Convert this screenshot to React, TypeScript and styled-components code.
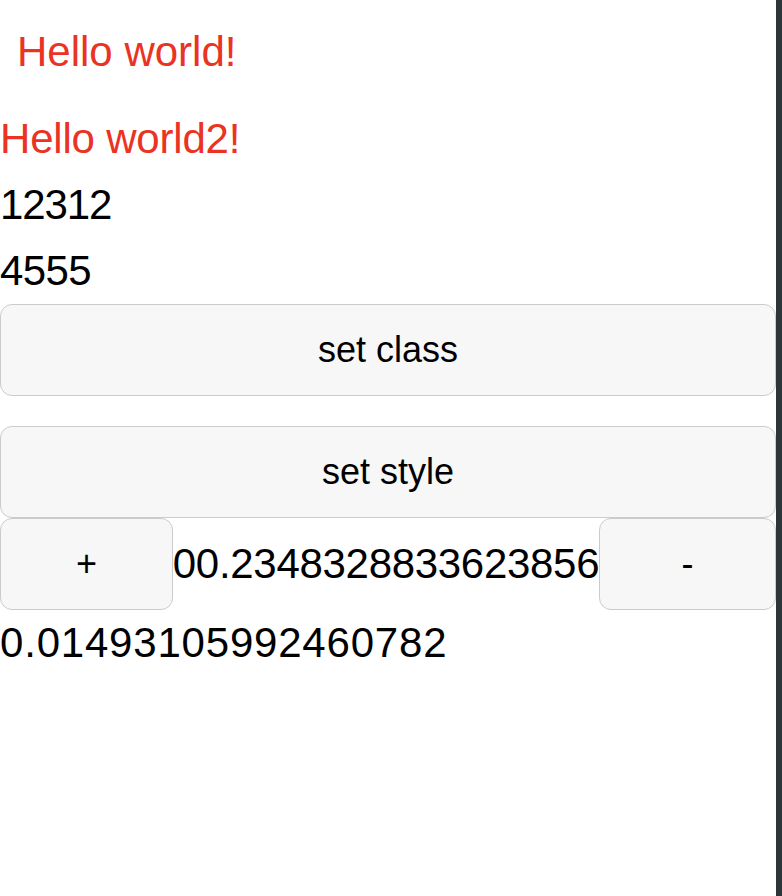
import React from "react";
import styled, { createGlobalStyle } from "styled-components";

const GlobalStyle = createGlobalStyle`
  html, body {
    margin: 0;
    padding: 0;
    background: #ffffff;
  }
  body {
    font-family: "Liberation Sans", Arial, Helvetica, sans-serif;
    color: #000000;
  }
`;

const Shell = styled.div`
  display: flex;
  width: 782px;
  min-height: 896px;
`;

const Main = styled.main`
  flex: 1;
  min-width: 0;
  display: flex;
  flex-direction: column;
`;

const EdgeStrip = styled.div`
  width: 6px;
  flex: none;
  background: #2c3538;
`;

const Line = styled.div<{ $red?: boolean; $track?: number }>`
  font-size: 42px;
  line-height: 66px;
  height: 66px;
  white-space: nowrap;
  letter-spacing: ${(p) => p.$track ?? 0}px;
  color: ${(p) => (p.$red ? "#ea3323" : "#000000")};
`;

const Title = styled(Line)`
  padding: 19px 0 21px 17px;
`;

const Button = styled.button<{ $spaced?: boolean }>`
  box-sizing: border-box;
  height: 92px;
  margin: 0 0 ${(p) => (p.$spaced ? "30px" : "0")} 0;
  padding: 0 12px;
  border: 1px solid #cbcbcb;
  border-radius: 12px;
  background: #f7f7f7;
  color: #000000;
  font-family: "Liberation Sans", Arial, Helvetica, sans-serif;
  font-size: 36px;
  cursor: pointer;
`;

const WideButton = styled(Button)`
  width: 100%;
`;

const StepRow = styled.div`
  display: flex;
  align-items: center;
  height: 92px;
`;

const StepButton = styled(Button)<{ $basis: number }>`
  flex: 1 1 ${(p) => p.$basis}px;
  min-width: 0;
`;

const RowValue = styled.span`
  flex: none;
  font-size: 42px;
  line-height: 66px;
  letter-spacing: -0.3px;
  white-space: nowrap;
`;

export default function App() {
  return (
    <>
      <GlobalStyle />
      <Shell>
        <Main>
          <Title $red>Hello world!</Title>
          <Line $red $track={-0.2}>Hello world2!</Line>
          <Line $track={-1.1}>12312</Line>
          <Line $track={-0.6}>4555</Line>
          <WideButton $spaced>set class</WideButton>
          <WideButton>set style</WideButton>
          <StepRow>
            <StepButton $basis={26}>+</StepButton>
            <RowValue>00.2348328833623856</RowValue>
            <StepButton $basis={30}>-</StepButton>
          </StepRow>
          <Line $track={0.8}>0.01493105992460782</Line>
        </Main>
        <EdgeStrip />
      </Shell>
    </>
  );
}
